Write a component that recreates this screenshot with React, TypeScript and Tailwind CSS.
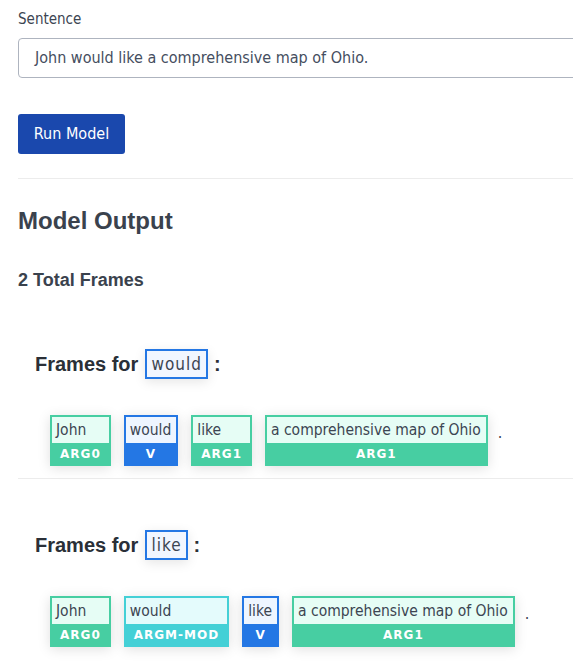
const body = "font-['DejaVu_Sans_Condensed','Liberation_Sans',sans-serif]";
const head = "font-['Liberation_Sans',Arial,sans-serif]";

type Span = { text: string; label: string; kind: "arg" | "mod" | "v" };

const FRAMES: { verb: string; spans: Span[] }[] = [
  {
    verb: "would",
    spans: [
      { text: "John", label: "ARG0", kind: "arg" },
      { text: "would", label: "V", kind: "v" },
      { text: "like", label: "ARG1", kind: "arg" },
      { text: "a comprehensive map of Ohio", label: "ARG1", kind: "arg" },
    ],
  },
  {
    verb: "like",
    spans: [
      { text: "John", label: "ARG0", kind: "arg" },
      { text: "would", label: "ARGM-MOD", kind: "mod" },
      { text: "like", label: "V", kind: "v" },
      { text: "a comprehensive map of Ohio", label: "ARG1", kind: "arg" },
    ],
  },
];

function SpanCard({ s }: { s: Span }) {
  const border =
    s.kind === "v" ? "border-[#2477e4] bg-[#2477e4]" : s.kind === "mod" ? "border-[#44d0d6] bg-[#44d0d6]" : "border-[#47cea2] bg-[#47cea2]";
  const inner = s.kind === "v" ? "bg-[#eef5ff]" : s.kind === "mod" ? "bg-[#e4fbfc]" : "bg-[#e6fdf5]";
  return (
    <div className={`flex flex-col border-2 ${border} shadow-[0_2px_12px_rgba(0,0,0,0.13)]`}>
      <div className={`${inner} h-[26px] pl-[4px] pr-[5px] text-[15.5px] leading-[26px] text-[#3c4552] whitespace-nowrap`}>{s.text}</div>
      <div className="h-[21px] px-[8px] text-center text-[12px] leading-[22px] font-bold tracking-[1px] text-white font-['DejaVu_Sans',Verdana,sans-serif]">
        {s.label}
      </div>
    </div>
  );
}

function Frame({ verb, spans, first, last }: { verb: string; spans: Span[]; first?: boolean; last?: boolean }) {
  return (
    <div className={`${last ? "" : "border-b border-[#ececec]"} ${first ? "pt-[52px]" : "pt-[51px]"} pb-[12px]`}>
      <div className={`flex items-center pl-[17px] text-[20px] font-bold text-[#2a2f37] ${head}`}>
        <span>Frames for</span>
        <span className="ml-[7px] mr-[6px] h-[30px] border-2 border-[#2477e4] bg-[#f1f6ff] px-[4px] text-[17px] font-normal leading-[26px] tracking-[1px] text-[#3c4552] shadow-[0_3px_12px_rgba(0,0,0,0.1)] font-['DejaVu_Sans_Condensed',sans-serif]">
          {verb}
        </span>
        <span>:</span>
      </div>
      <div className="mt-[36px] flex items-start gap-[13px] pl-[32px]">
        {spans.map((s, i) => (
          <SpanCard key={i} s={s} />
        ))}
        <span className="-ml-[3px] pt-[6px] text-[16px] text-[#3c4552]">.</span>
      </div>
    </div>
  );
}

export default function App() {
  return (
    <div className={`h-[667px] w-[573px] overflow-hidden bg-white ${body}`}>
      <div className="w-[720px] pl-[18px] pt-[8px]">
        <label className="block text-[15px] leading-[22px] text-[#3c4552]">Sentence</label>
        <div className="mt-[8px] h-[40px] rounded-[4px] border border-[#aeb4bf] px-[16px] text-[16px] leading-[38px] text-[#454e60]">
          John would like a comprehensive map of Ohio.
        </div>
        <button className="mt-[36px] h-[40px] w-[107px] rounded-[3px] bg-[#1a48ad] text-[16px] text-white">Run Model</button>
        <div className="mt-[24px] border-t border-[#ececec]" />
        <h2 className={`mt-[28px] text-[24px] font-bold leading-[28px] text-[#3a424d] ${head}`}>Model Output</h2>
        <p className={`mt-[34px] text-[18px] font-bold leading-[22px] text-[#3a424d] ${head}`}>2 Total Frames</p>
        <div className="mt-[6px]">
          {FRAMES.map((f, i) => (
            <Frame key={i} verb={f.verb} spans={f.spans} first={i === 0} last={i === FRAMES.length - 1} />
          ))}
        </div>
      </div>
    </div>
  );
}
